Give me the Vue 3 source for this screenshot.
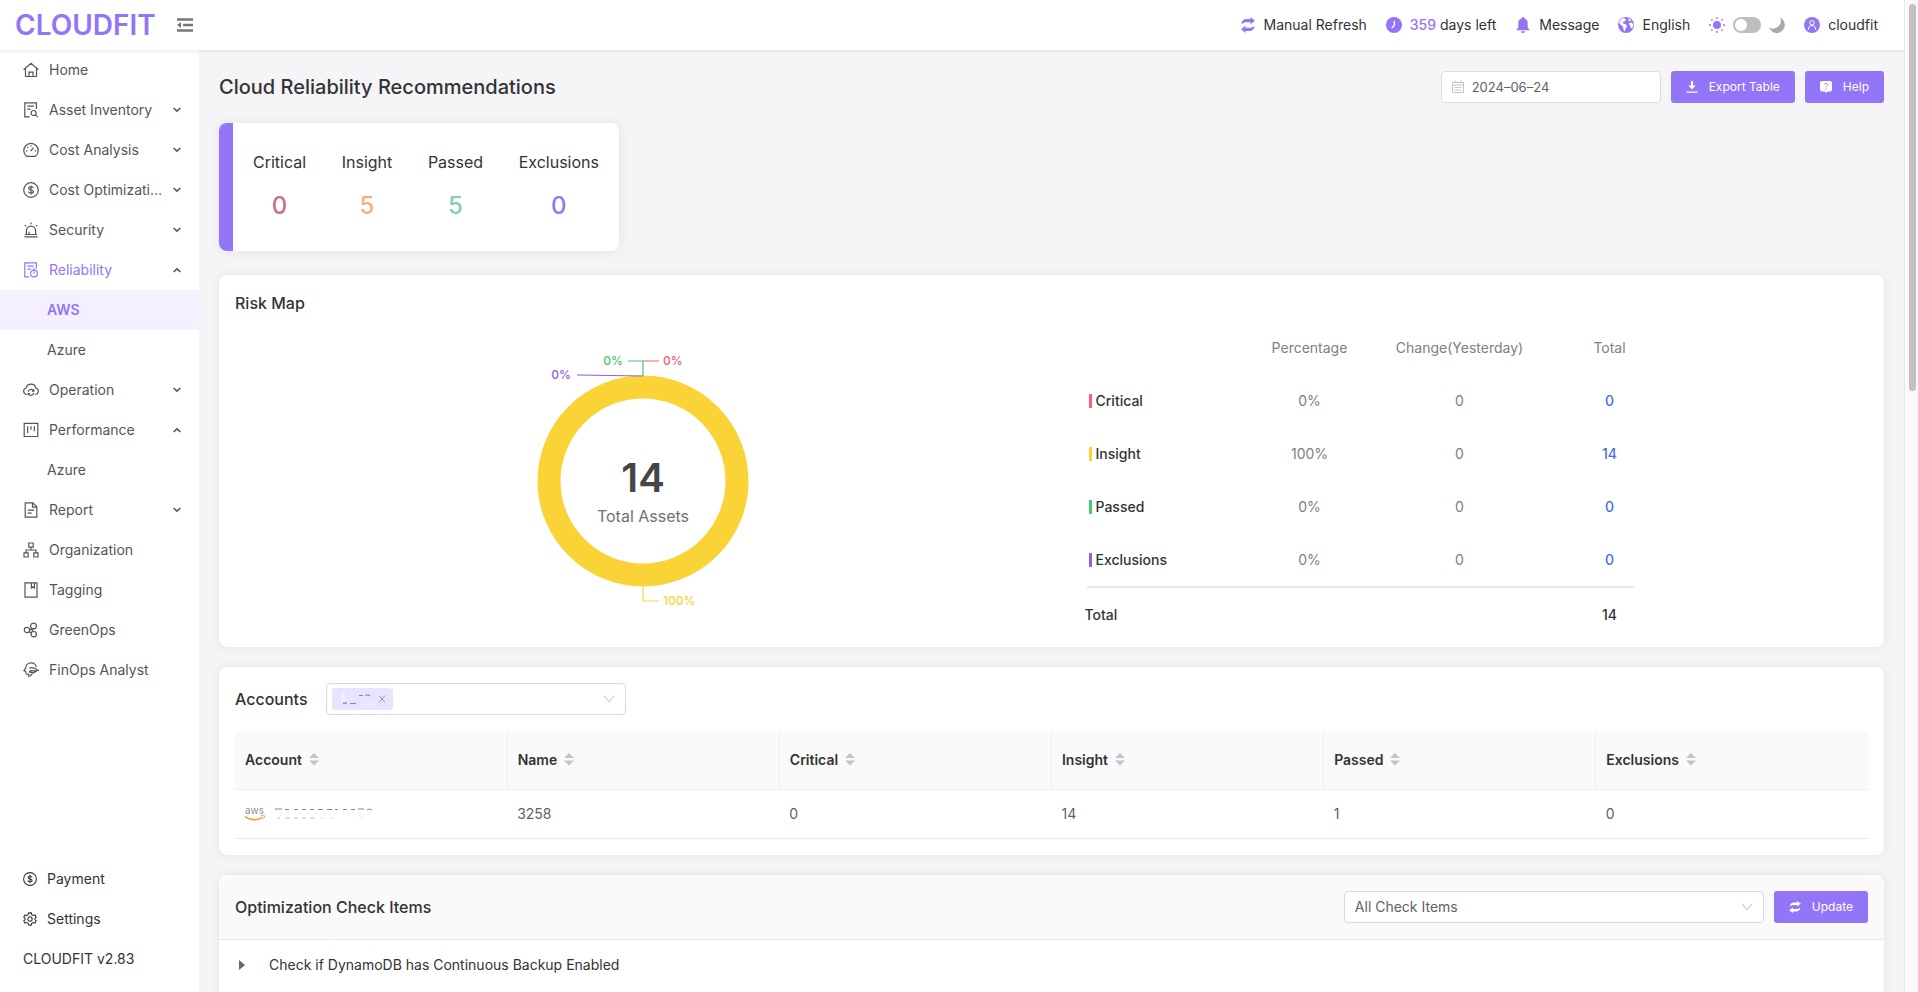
<script setup>
import { ref } from 'vue'

const icons = {
  home: '<path d="M.6 7.8 8 1.2l7.400 6.600M2.500 6.700v7.800h11V6.700M6 14.500v-4.300h4v4.300"/>',
  asset: '<path d="M13.400 7V.8H1.800v14h4.800M4.300 4.200h6.500M4.300 7.200h3.400"/><circle cx="10.600" cy="11" r="2.500"/><path d="m12.500 12.900 2.200 2.200"/>',
  gauge: '<path d="M3.600 14.300A7.200 7.200 0 1 1 12.400 14.300Z"/><path d="m7.600 9.200 3-3.600M8 3.300v1.300M4.300 4.900l.9.900M2.900 8.800h1.400M11.700 8.800h1.400"/>',
  dollar: '<circle cx="8" cy="8" r="7.300"/><path d="M10.300 6.200c-.3-1-1.200-1.400-2.300-1.400-1.300 0-2.300.6-2.300 1.600 0 2.200 4.700 1 4.700 3.200 0 1-1 1.600-2.400 1.600-1.200 0-2.200-.5-2.500-1.500M8 3.500v9"/>',
  alarm: '<path d="M3.400 12.500V8.800a4.600 4.600 0 0 1 9.200 0v3.700M1.500 14.900h13M2 12.500h12M8 .6v1.600M1.800 3.200l1.100 1.100M14.200 3.200l-1.100 1.100M6 12.500V9.800"/>',
  reliability: '<path d="M13.400 6.500V.8H1.800v14h4.400M4.300 4.200h6.500M4.300 7.200h3.900"/><circle cx="11" cy="11.500" r="3.400"/><path d="M11 9.600v2.200M10 7h2"/>',
  cloud: '<path d="M3.800 12.500A3.300 3.300 0 0 1 3.200 6a4.900 4.900 0 0 1 9.600 0 3.300 3.300 0 0 1-.6 6.500"/><path d="M5.300 9.700a2.800 2.800 0 0 1 5.300-.8M10.700 10.900a2.800 2.800 0 0 1-5.300.8M10.800 7.300v1.800H9M5.200 13.300v-1.800H7"/>',
  board: '<path d="M1.200 1.300h13.600v13.200H1.200zM4.700 4.200v7M8 4.200v3.500M11.300 4.200v5"/>',
  report: '<path d="M2.200.8h7.600l4 4v10.400H2.200zM9.500.8v4.300h4.300M4.700 8.200h6.600M4.700 11.200h4"/>',
  org: '<path d="M5.800 1h4.400v4.200H5.800zM1 10.800h4.200V15H1zM10.800 10.800H15V15h-4.200zM8 5.200V8M3.100 10.800V8h9.800v2.800"/>',
  tag: '<path d="M2 .9h12v14.300H2zM8.400.9v5l1.500-1.200 1.500 1.200v-5"/>',
  green: '<circle cx="4" cy="8" r="2.700"/><circle cx="10.500" cy="4" r="2.900"/><circle cx="10.700" cy="12.200" r="2.700"/><path d="M7 7.200c1.500 0 2.500.6 3.100 2.200M8 6.800l3.700-.2M6.300 9.400 8.400 11"/>',
  analyst: '<path d="M5.800 15.200v-2.900C3.500 12.500 2.700 11.800 2.800 9.700L.9 8.500l1.700-2C2.700 3.300 4.900.9 8 .9c3 0 5.200 2 5.300 4.700M6.600 6.200C8.100 4.800 9.800 6.300 11.500 6.300L15.300 8.500l-4.300.3H6.600M5.800 9.900l4.700.9 3.200-1.900M9.400 11.600 7 14.400"/>',
  gear: '<circle cx="8" cy="8" r="2.500"/><path d="m6.500 1-.5 2-1.700 1-2-.6L.9 6l1.500 1.400v1.300L.9 10l1.400 2.600 2-.6L6 13l.5 2h3l.5-2 1.700-1 2 .6 1.400-2.600-1.500-1.300V7.400L15.100 6l-1.400-2.600-2 .6L10 3l-.5-2z"/>',
}

const menu = ref([
  { label: 'Home', icon: 'home' },
  { label: 'Asset Inventory', icon: 'asset', group: true },
  { label: 'Cost Analysis', icon: 'gauge', group: true },
  { label: 'Cost Optimization', icon: 'dollar', group: true },
  { label: 'Security', icon: 'alarm', group: true },
  { label: 'Reliability', icon: 'reliability', group: true, open: true, current: true, children: ['AWS', 'Azure'] },
  { label: 'Operation', icon: 'cloud', group: true },
  { label: 'Performance', icon: 'board', group: true, open: true, children: ['Azure'] },
  { label: 'Report', icon: 'report', group: true },
  { label: 'Organization', icon: 'org' },
  { label: 'Tagging', icon: 'tag' },
  { label: 'GreenOps', icon: 'green' },
  { label: 'FinOps Analyst', icon: 'analyst' },
])

const stats = [
  { label: 'Critical', value: 0, tone: 'rose' },
  { label: 'Insight', value: 5, tone: 'amber' },
  { label: 'Passed', value: 5, tone: 'teal' },
  { label: 'Exclusions', value: 0, tone: 'violet' },
]

const risks = [
  { label: 'Critical', pct: '0%', change: 0, total: 0, tone: 'bar-red' },
  { label: 'Insight', pct: '100%', change: 0, total: 14, tone: 'bar-yellow' },
  { label: 'Passed', pct: '0%', change: 0, total: 0, tone: 'bar-green' },
  { label: 'Exclusions', pct: '0%', change: 0, total: 0, tone: 'bar-purple' },
]

const columns = ['Account', 'Name', 'Critical', 'Insight', 'Passed', 'Exclusions']
const values = ['3258', '0', '14', '1', '0']
const date = ref('2024–06–24')
const dark = ref(false)
</script>

<template>
  <div class="shell">
    <div class="app">
      <header class="topbar">
        <a class="logo" href="#">CLOUDFIT</a>
        <button class="fold" aria-label="Collapse menu">
          <svg width="16" height="14" viewBox="0 0 16 14"><path d="M0 1.500h16M6 7h10M0 12.500h16" stroke="#777" stroke-width="2.600"/><path d="M0 7 4 4v6z" fill="#777"/></svg>
        </button>
        <div class="tools">
          <button class="tool">
            <svg width="16" height="16" viewBox="0 0 16 16" class="solid"><path d="M1.500 7.300C1.500 3.600 4 2 6.500 2h4V0l4.500 3.700-4.500 3.600V5.200H6.500C4.500 5.200 3 5.800 1.500 7.300ZM14.500 8.700c0 3.700-2.500 5.300-5 5.300h-4v2L1 12.300l4.500-3.600v2.100h4c2 0 3.500-.6 5-2.100Z"/></svg>
            <span>Manual Refresh</span>
          </button>
          <a class="tool" href="#">
            <svg width="16" height="16" viewBox="0 0 16 16"><circle cx="8" cy="8" r="8" fill="#9375f7"/><path d="M8.300 4v4.500L5.700 11" fill="none" stroke="#fff" stroke-width="1.400"/></svg>
            <span><b>359</b> days left</span>
          </a>
          <a class="tool" href="#">
            <svg width="16" height="16" viewBox="0 0 16 16" class="solid"><path d="M8 0c.7 0 1.200.5 1.200 1.200C11.500 1.800 12.700 3.600 12.700 6v4.500l1.900 2.300v.5H1.400v-.5l1.900-2.300V6c0-2.400 1.200-4.200 3.500-4.800C6.800.5 7.300 0 8 0ZM6 14.200h4c-.2 1.100-.9 1.800-2 1.800s-1.800-.7-2-1.800Z"/></svg>
            <span>Message</span>
          </a>
          <button class="tool">
            <svg width="16" height="16" viewBox="0 0 16 16"><circle cx="8" cy="8" r="8" fill="#9375f7"/><path d="M5.500 1 8 2.300 6.800 4.500 4.600 5l.8 1.600 2.600.8 1.200 2-1.800 2.200L7 14.700l-1.600-2.500L5 9.500 2.600 7.800.9 5.600 3 2.500Z M10.500 1.300l2.900 1.900-1.700 1-1.500-1ZM10.800 6.300l2.700-.8 2 1.800-.8 3.200-1.700.9-.8-2.700Z" fill="#fff"/></svg>
            <span>English</span>
          </button>
          <label class="theme">
            <svg width="16" height="16" viewBox="0 0 16 16"><circle cx="8" cy="8" r="4" fill="#9375f7"/><path d="M8 0v2M8 14v2M0 8h2M14 8h2M2.300 2.300l1.200 1.200M12.500 12.500l1.200 1.200M2.300 13.700l1.200-1.200M12.500 3.500l1.200-1.200" stroke="#9375f7" stroke-width="1.400"/></svg>
            <input v-model="dark" type="checkbox" class="switch" aria-label="Dark mode">
            <svg width="16" height="16" viewBox="0 0 16 16"><path d="M11 .6a8 8 0 1 1-10.800 9.800A7.600 7.600 0 0 0 11 .6Z" fill="#a8a9ae"/></svg>
          </label>
          <button class="tool">
            <svg width="16" height="16" viewBox="0 0 16 16"><circle cx="8" cy="8" r="8" fill="#9375f7"/><circle cx="8" cy="5.800" r="2.200" fill="none" stroke="#fff"/><path d="M4.300 12.700c0-2.500 1.500-4.200 3.700-4.200s3.700 1.700 3.700 4.200" fill="none" stroke="#fff"/></svg>
            <span>cloudfit</span>
          </button>
        </div>
      </header>

      <div class="body">
        <aside class="side">
          <nav class="menu">
            <template v-for="m in menu" :key="m.label">
              <component :is="m.group ? 'button' : 'a'" :href="m.group ? null : '#'" class="item" :class="{ current: m.current }" @click="m.open = !m.open">
                <svg class="line" width="16" height="16" viewBox="0 0 16 16" v-html="icons[m.icon]"></svg>
                <span class="name">{{ m.label }}</span>
                <svg v-if="m.group" class="caret" :class="{ up: m.open }" width="8" height="6" viewBox="0 0 8 6"><path d="m.6 1 3.400 3.200L7.400 1"/></svg>
              </component>
              <template v-if="m.children && m.open">
                <a v-for="c in m.children" :key="c" href="#" class="sub" :class="{ active: c === 'AWS' }">{{ c }}</a>
              </template>
            </template>
          </nav>
          <nav class="foot">
            <a href="#" class="item"><svg class="line" width="14" height="14" viewBox="0 0 16 16" v-html="icons.dollar"></svg><span>Payment</span></a>
            <a href="#" class="item"><svg class="line" width="14" height="14" viewBox="0 0 16 16" v-html="icons.gear"></svg><span>Settings</span></a>
            <p class="item">CLOUDFIT v2.83</p>
          </nav>
        </aside>

        <main class="main">
          <div class="head">
            <h1>Cloud Reliability Recommendations</h1>
            <label class="date">
              <svg width="12" height="13" viewBox="0 0 12 13" fill="none" stroke="#c0c4cc"><path d="M.5 2.500h11v10H.5zM.5 5h11M3 .5v2M9 .5v2M2.500 7.500h7M2.500 10h7" /></svg>
              <input v-model="date" type="text" aria-label="Report date">
            </label>
            <button class="primary">
              <svg width="12" height="12" viewBox="0 0 12 12"><path d="M5 0h2v4.500h2.700L6 8.600 2.300 4.500H5zM.5 10.400h11v1.300H.5z" fill="#fff"/></svg>
              Export Table
            </button>
            <button class="primary">
              <svg width="12" height="12" viewBox="0 0 12 12"><path d="M2 0h8a2 2 0 0 1 2 2v6.500a2 2 0 0 1-2 2H7.300L6 12l-1.300-1.500H2a2 2 0 0 1-2-2V2a2 2 0 0 1 2-2Z" fill="#fff"/><path d="M4.500 4c.1-1 .7-1.500 1.600-1.500.9 0 1.500.5 1.500 1.300C7.600 5 6 5 6 6.400M6 7.500v1.200" fill="none" stroke="#9375f7"/></svg>
              Help
            </button>
          </div>

          <section class="stats card">
            <dl>
              <div v-for="s in stats" :key="s.label">
                <dt>{{ s.label }}</dt>
                <dd :class="s.tone">{{ s.value }}</dd>
              </div>
            </dl>
          </section>

          <section class="card risk">
            <h2>Risk Map</h2>
            <div class="halves">
              <svg class="donut" width="250" height="270" viewBox="0 0 250 270" role="img" aria-label="Risk distribution">
                <circle cx="125" cy="135" r="94" fill="none" stroke="#fad337" stroke-width="23"/>
                <g fill="none" stroke-width="1.200">
                  <path d="M125 15h16" stroke="#f27a8c"/>
                  <path d="M125 30V15h-15" stroke="#4cc76e"/>
                  <path d="M125 30 59 29" stroke="#9060e0"/>
                  <path d="M125 240v15h16" stroke="#fad337"/>
                </g>
                <g font-size="12" font-weight="500">
                  <text x="145" y="19" fill="#ee5f75">0%</text>
                  <text x="105" y="19" fill="#4cc76e" text-anchor="end">0%</text>
                  <text x="53" y="33" fill="#9060e0" text-anchor="end">0%</text>
                  <text x="145" y="259" fill="#fad337">100%</text>
                </g>
                <text x="125" y="146" text-anchor="middle" font-size="40" font-weight="600" fill="#464646">14</text>
                <text x="125" y="176" text-anchor="middle" font-size="16" fill="#6e7079">Total Assets</text>
              </svg>
              <table class="risks">
                <thead>
                  <tr><th></th><th>Percentage</th><th>Change(Yesterday)</th><th>Total</th></tr>
                </thead>
                <tbody>
                  <tr v-for="r in risks" :key="r.label">
                    <th><span class="key" :class="r.tone">{{ r.label }}</span></th>
                    <td>{{ r.pct }}</td>
                    <td>{{ r.change }}</td>
                    <td><a href="#">{{ r.total }}</a></td>
                  </tr>
                </tbody>
                <tfoot>
                  <tr class="rule"><td colspan="4"><hr></td></tr>
                  <tr><th>Total</th><td></td><td></td><td>14</td></tr>
                </tfoot>
              </table>
            </div>
          </section>

          <section class="card accounts">
            <div class="pick">
              <h2 id="acc">Accounts</h2>
              <div class="box">
                <button class="chip" aria-label="Remove account">
                  <svg width="34" height="14" viewBox="0 0 34 14" fill="none"><path d="M4 0Q-1 5 2 10h3V1ZM22 11.500h13v1.500H22z" fill="#f4f0fe"/><path d="M3 11.200h4M10 11.500h6M19 3.500h4M25 3l5 .4" stroke="#9375f7" stroke-width="1.200"/></svg>
                  <svg width="8" height="8" viewBox="0 0 8 8"><path d="m.8.5 6.400 7M7.200.5l-6.400 7" stroke="#999"/></svg>
                </button>
                <select aria-labelledby="acc"><option></option></select>
                <svg class="vee" width="12" height="8" viewBox="0 0 12 8"><path d="m1 .8 5 6 5-6"/></svg>
              </div>
            </div>
            <table class="grid">
              <thead>
                <tr>
                  <th v-for="c in columns" :key="c">
                    <button class="sort">{{ c }}<svg width="10" height="13" viewBox="0 0 10 13" fill="#c0c4cc"><path d="m5 0 5 5H0zM0 7.500h10l-5 5z"/></svg></button>
                  </th>
                </tr>
              </thead>
              <tbody>
                <tr>
                  <td>
                    <div class="acct">
                      <svg width="20" height="18" viewBox="0 0 20 18"><text x="0" y="9" font-size="10" fill="#8c919b">aws</text><path d="M0 11.500c5.500 4 12 4 17.500.8" fill="none" stroke="#f79a2c" stroke-width="1.500"/><path d="M16 10.800c2-.6 3.300-.4 3.500 0s-.2 2-1.200 3" fill="none" stroke="#f79a2c"/></svg>
                      <svg width="98" height="11" viewBox="0 0 98 11" fill="none" stroke="#888"><path d="M0 1h7M10 1.500h4M19 1.500h4M27 1.500h4M35 1.500h4M43 1.500h5M52 1.500h5M60 1.500h3M68 1.500h4M76 1.500h4M83 1h6M92 2q2-2 5 0"/><path d="M3 10h2M11 10h4M19 10h4M27 10h4M35 10h4" stroke="#bbb"/><path d="M45 10h5M54 10h4M84 10h4" stroke="#e4e4e4"/></svg>
                    </div>
                  </td>
                  <td v-for="(v, i) in values" :key="i">{{ v }}</td>
                </tr>
              </tbody>
            </table>
          </section>

          <section class="card checks">
            <div class="bar">
              <h2 id="chk">Optimization Check Items</h2>
              <div class="box wide">
                <select aria-labelledby="chk"><option>All Check Items</option></select>
                <svg class="vee" width="12" height="8" viewBox="0 0 12 8"><path d="m1 .8 5 6 5-6"/></svg>
              </div>
              <button class="primary">
                <svg width="12" height="12" viewBox="0 0 16 16" fill="#fff"><path d="M1 7.300C1 3.600 4 2 6.500 2h4V0L16 3.700l-5.500 3.600V5.200h-4C4.500 5.200 3 5.800 1 7.300ZM15 8.700c0 3.700-3 5.300-5.500 5.300h-4v2L0 12.300l5.500-3.600v2.100h4c2 0 3.500-.6 5.500-2.100Z"/></svg>
                Update
              </button>
            </div>
            <button class="check">
              <svg width="6" height="10" viewBox="0 0 6 10"><path d="m0 0 6 5-6 5z" fill="#666"/></svg>
              Check if DynamoDB has Continuous Backup Enabled
            </button>
          </section>
        </main>
      </div>
    </div>
    <div class="track"><div class="thumb"></div></div>
  </div>
</template>

<style>
body { margin: 0; overflow: hidden; }
</style>

<style scoped>
* { box-sizing: border-box; }
.shell { display: flex; height: 100vh; font: 14px/20px Inter, "Liberation Sans", sans-serif; color: #333; background: #f5f5f8; }
.app { flex: 1; min-width: 0; display: flex; flex-direction: column; overflow: hidden; }
.track { width: 14px; padding: 4px 2px 0 4px; background: #fafafa; border-left: 1px solid #e8e8e8; }
.thumb { height: 39vh; border-radius: 4px; background: #c1c1c1; }
button, input, select { font: inherit; color: inherit; background: none; border: 0; padding: 0; margin: 0; outline: 0; }
button { cursor: pointer; }
a { color: inherit; text-decoration: none; }
svg { flex: none; display: block; }
h1, h2, p, dl, dd { margin: 0; font-weight: 500; }

.topbar { position: relative; z-index: 1; display: flex; align-items: center; height: 50px; padding: 0 26px 0 15px; background: #fff; box-shadow: 0 1px 4px rgba(0, 21, 41, .1); }
.logo { width: 162px; font-size: 28px; line-height: 32px; font-weight: 600; color: #9375f7; }
.tools { display: flex; align-items: center; gap: 19px; margin-left: auto; }
.tool { display: flex; align-items: center; gap: 8px; }
.tool b { color: #9375f7; font-weight: 500; }
.solid { fill: #9375f7; }
.theme { display: flex; align-items: center; gap: 8px; }
.switch { appearance: none; display: flex; width: 28px; height: 16px; padding: 2px; border-radius: 8px; background: #bfbfbf; }
.switch::before { content: ""; width: 12px; height: 12px; border-radius: 6px; background: #fff; }
.switch:checked { justify-content: flex-end; background: #9375f7; }

.body { flex: 1; min-height: 0; display: flex; }
.side { width: 199px; flex: none; display: flex; flex-direction: column; justify-content: space-between; background: #fff; color: #555; }
.item { display: flex; align-items: center; gap: 10px; width: 100%; height: 40px; padding: 0 18px 0 23px; text-align: left; }
.name { flex: 1; min-width: 0; overflow: hidden; text-overflow: ellipsis; white-space: nowrap; }
.line { fill: none; stroke: currentColor; stroke-width: 1.2; }
.caret { fill: none; stroke: #555; stroke-width: 1.6; }
.caret.up { transform: rotate(180deg); }
.current { color: #9375f7; }
.sub { display: block; padding: 10px 0 10px 47px; }
.sub.active { background: #f5f0ff; color: #9375f7; font-weight: 600; }
.foot { padding-bottom: 13px; color: #333; }
.foot .item { font-weight: 400; }

.main { flex: 1; min-width: 0; padding: 20px 20px 0; overflow: hidden; color: #606266; }
.head { display: flex; align-items: center; gap: 10px; margin-bottom: 20px; height: 33px; }
h1 { flex: 1; font-size: 20px; line-height: 28px; color: #333; }
h2 { font-size: 16px; line-height: 24px; color: #333; }
.date { display: flex; align-items: center; gap: 8px; width: 220px; height: 32px; padding: 0 10px; background: #fff; border: 1px solid #dcdfe6; border-radius: 4px; font-size: 13px; }
.date input { flex: 1; min-width: 0; }
.primary { display: flex; align-items: center; gap: 11px; height: 32px; padding: 0 15px; border-radius: 3px; background: #9375f7; color: #fff; font-size: 12px; }
.card { background: #fff; border-radius: 8px; box-shadow: 0 0 12px rgba(0, 0, 0, .08); margin-bottom: 20px; }

.stats { width: 400px; height: 128px; border-left: 14px solid #9375f7; margin-bottom: 24px; }
.stats dl { display: flex; justify-content: space-between; padding: 27px 20px; text-align: center; color: #333; }
.stats dt { font-size: 16px; line-height: 24px; font-weight: 400; }
.stats dd { font-size: 24px; line-height: 32px; margin-top: 16px; }
.rose { color: #cb6d8e; }
.amber { color: #efb27e; }
.teal { color: #84ccbc; }
.violet { color: #9375f7; }

.risk { padding: 16px 16px 6px; }
.halves { display: grid; grid-template-columns: 1fr 1fr; }
.donut { justify-self: center; margin-top: 31px; font-family: Inter, sans-serif; }
.risks { width: 600px; margin: 6px 0 0 33px; border-collapse: collapse; table-layout: fixed; text-align: center; color: #808080; }
.risks th, .risks td { height: 53px; padding: 0; font-weight: 400; }
.risks tbody th, .risks tfoot th { text-align: left; font-weight: 500; color: #333; }
.risks tfoot td { color: #333; font-weight: 500; }
.risks a { color: #4a6fdc; font-weight: 500; }
.key { display: flex; align-items: center; gap: 4px; padding-left: 4px; }
.key::before { content: ""; width: 3px; height: 14px; background: currentColor; }
.bar-red::before { background: #f5627a; }
.bar-yellow::before { background: #fad337; }
.bar-green::before { background: #4cc76e; }
.bar-purple::before { background: #9060e0; }
.risks .rule td { height: 2px; }
hr { width: 547px; height: 2px; margin: 0 0 0 2px; border: 0; background: #e8e8e8; }

.accounts { padding: 16px; }
.pick { display: flex; align-items: center; gap: 18px; margin-bottom: 16px; }
.box { display: flex; align-items: center; width: 300px; height: 32px; padding: 0 10px 0 5px; border: 1px solid #d9d9d9; border-radius: 4px; background: #fff; }
.box.wide { width: 420px; padding-left: 10px; }
.box select { flex: 1; appearance: none; }
.vee { fill: none; stroke: #bbb; }
.chip { display: flex; align-items: center; gap: 4px; height: 22px; padding: 0 7px 0 8px; border-radius: 3px; background: #e9e3fd; }
.grid { width: 100%; border-collapse: collapse; table-layout: fixed; text-align: left; }
.grid th { height: 58px; padding: 0 10px; background: #fafafa; border-bottom: 1px solid #ebeef5; }
.grid th + th { border-left: 1px solid #ebeef5; }
.grid td { height: 49px; padding: 0 10px; border-bottom: 1px solid #ebebeb; }
.sort { display: flex; align-items: center; gap: 7px; font-weight: 600; color: #333; }
.acct { display: flex; align-items: center; gap: 10px; }

.checks { margin: 0; height: 240px; overflow: hidden; }
.bar { display: flex; align-items: center; gap: 10px; height: 65px; padding: 0 16px; background: #fafafa; border-bottom: 1px solid #e8e8e8; }
.bar h2 { flex: 1; }
.check { display: flex; align-items: center; gap: 24px; width: 100%; height: 50px; padding: 0 20px; color: #333; text-align: left; }
</style>
